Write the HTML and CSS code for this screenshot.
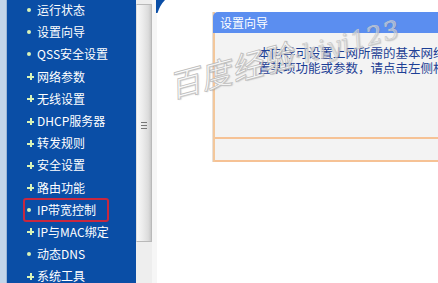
FILE: index.html
```html
<!DOCTYPE html>
<html lang="zh-CN">
<head>
<meta charset="utf-8">
<link rel="stylesheet" href="styles.css">
</head>
<body>
<div class="page">
  <div class="edge"></div>
  <nav class="menu">
    <ul>
      <li><span class="item"><i class="dot"></i>运行状态</span></li>
      <li><span class="item"><i class="dot"></i>设置向导</span></li>
      <li><span class="item"><i class="dot"></i>QSS安全设置</span></li>
      <li><span class="item"><i class="plus"></i>网络参数</span></li>
      <li><span class="item"><i class="plus"></i>无线设置</span></li>
      <li><span class="item"><i class="plus"></i>DHCP服务器</span></li>
      <li><span class="item"><i class="plus"></i>转发规则</span></li>
      <li><span class="item"><i class="plus"></i>安全设置</span></li>
      <li><span class="item"><i class="plus"></i>路由功能</span></li>
      <li><span class="item active"><i class="dot"></i>IP带宽控制</span></li>
      <li><span class="item"><i class="plus"></i>IP与MAC绑定</span></li>
      <li><span class="item"><i class="dot"></i>动态DNS</span></li>
      <li><span class="item"><i class="plus"></i>系统工具</span></li>
    </ul>
  </nav>
  <div class="scrollbar">
    <div class="thumb"><span class="grip"></span></div>
  </div>
  <main class="content">
    <svg class="corner" width="12" height="14" viewBox="0 0 12 14"><path d="M0 0 L9 0 Q4 5 1.5 13 L0 13 Z" fill="#0a4ea6"/></svg>
    <section class="panel">
      <header class="panel-head">设置向导</header>
      <div class="panel-body">
        <p>本向导可设置上网所需的基本网络参数，请单击“下一步”继续。若要详细设<br>置某项功能或参数，请点击左侧相关栏目。</p>
      </div>
      <div class="panel-foot"></div>
    </section>
  </main>
  <div class="watermark">百度经验<span class="wm-small">·kiyi123</span></div>
</div>
</body>
</html>
```

FILE: styles.css
```css
* { box-sizing: border-box; }
html, body { margin: 0; padding: 0; }
body {
  width: 438px;
  height: 283px;
  overflow: hidden;
  background: #ffffff;
  font-family: "Noto Sans CJK SC", "DejaVu Sans", sans-serif;
}
.page {
  position: relative;
  display: flex;
  width: 438px;
  height: 283px;
  overflow: hidden;
}
.edge {
  width: 7px;
  flex: none;
  background: #c3d5ea;
  border-right: 1px solid #9db7d8;
}
.menu {
  width: 129px;
  flex: none;
  background: #0a4ea6;
}
.menu ul {
  list-style: none;
  margin: -1px 0 0 0;
  padding: 0;
}
.menu li {
  height: 22.2px;
  display: flex;
  align-items: center;
  padding-left: 16px;
}
.item {
  display: inline-flex;
  align-items: center;
  height: 24px;
  padding: 0 11px 0 2px;
  border: 2px solid transparent;
  border-radius: 3px;
  color: #ffffff;
  font-size: 12px;
  line-height: 16px;
  white-space: nowrap;
}
.item.active {
  border-color: #c8283f;
}
.dot {
  width: 4px;
  height: 4px;
  border-radius: 50%;
  background: #d8f3b8;
  margin: 0 6px 0 0;
  flex: none;
}
.plus {
  position: relative;
  width: 7px;
  height: 7px;
  margin: 0 3px 0 0;
  flex: none;
}
.plus::before, .plus::after {
  content: "";
  position: absolute;
  background: #d8f3b8;
}
.plus::before { left: 0; top: 3px; width: 7px; height: 2px; }
.plus::after { left: 2.5px; top: 0; width: 2px; height: 7px; }

.scrollbar {
  width: 16px;
  flex: none;
  background: #eeeeee;
  padding-top: 4px;
}
.thumb {
  height: 238px;
  border: 1px solid #b9b9b9;
  border-left-color: #e0e0e0;
  background: linear-gradient(to right, #f8f8f8 0%, #ececec 40%, #dcdcdc 80%, #c8c8c8 100%);
  display: flex;
  align-items: center;
  justify-content: center;
  padding-bottom: 2px;
}
.grip {
  display: block;
  width: 6px;
  height: 7px;
  background: repeating-linear-gradient(to bottom, #777 0, #777 1px, transparent 1px, transparent 3px);
  margin-top: 6px;
}
.content {
  position: relative;
  flex: 1;
  padding: 12px 0 0 56px;
  border-left: 5px solid #f6f6f6;
}
.corner {
  position: absolute;
  left: -1px;
  top: 0;
}
.panel {
  width: 300px;
  border-left: 2px solid #f3c79b;
  background: #f3f3f3;
  box-shadow: -1px 0 0 #e8e0d8;
}
.panel-head {
  height: 21px;
  background: #5b8ef0;
  border-top-left-radius: 5px;
  color: #ffffff;
  font-size: 12px;
  line-height: 21px;
  padding-left: 7px;
  margin-left: -2px;
}
.panel-body {
  height: 106px;
  padding: 12px 0 0 43px;
  border-bottom: 2px solid #f6c295;
}
.panel-body p {
  margin: 0;
  color: #1d3f95;
  font-size: 12.5px;
  line-height: 15px;
  white-space: nowrap;
}
.panel-foot {
  height: 23px;
  border-bottom: 2px solid #f6c295;
}
.watermark {
  position: absolute;
  left: 175px;
  top: 62px;
  transform: rotate(-15deg);
  transform-origin: left bottom;
  font-size: 31px;
  font-weight: normal;
  font-style: italic;
  color: rgba(255, 255, 255, 0.8);
  -webkit-text-stroke: 0.8px #bdbdbd;
  text-shadow: 1px 1px 1px rgba(120,120,120,0.3);
  white-space: nowrap;
  letter-spacing: 1px;
}
.wm-small {
  font-size: 25px;
  font-family: "DejaVu Serif", serif;
  color: rgba(235,235,235,0.45);
  -webkit-text-stroke: 0.6px #c8c8c8;
}
```
